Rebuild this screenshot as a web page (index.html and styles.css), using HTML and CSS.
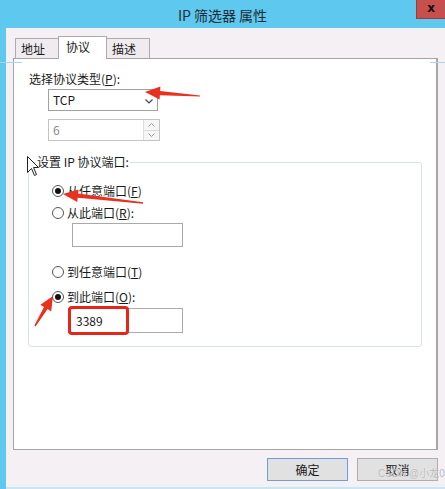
FILE: index.html
```html
<!DOCTYPE html>
<html lang="zh-CN">
<head>
<meta charset="utf-8">
<title>IP 筛选器 属性</title>
<link rel="stylesheet" href="styles.css">
</head>
<body>
<div class="win">
  <div class="titlebar">
    <span></span>
    <span class="title">IP 筛选器 属性</span>
    <span class="close">x</span>
  </div>
  <div class="frame">
    <div class="tabs">
      <div class="tab">地址</div>
      <div class="tab active">协议</div>
      <div class="tab">描述</div>
    </div>
    <div class="panel">
      <div class="label">选择协议类型(<u>P</u>):</div>
      <div class="select">
        <span>TCP</span>
        <svg class="chev" width="8" height="5" viewBox="0 0 8 5"><path d="M0.5 0.5 L4 4 L7.5 0.5" fill="none" stroke="#444" stroke-width="1.2"/></svg>
      </div>
      <div class="spin">
        <span class="spin-val">6</span>
        <div class="spin-btns">
          <div class="sb"><svg width="7" height="4" viewBox="0 0 7 4"><path d="M0.5 3.5 L3.5 0.5 L6.5 3.5" fill="none" stroke="#999" stroke-width="1"/></svg></div>
          <div class="sb"><svg width="7" height="4" viewBox="0 0 7 4"><path d="M0.5 0.5 L3.5 3.5 L6.5 0.5" fill="none" stroke="#999" stroke-width="1"/></svg></div>
        </div>
      </div>
      <fieldset class="group">
        <legend>设置 IP 协议端口:</legend>
        <div class="row r1"><span class="radio checked"></span><span>从任意端口(<u>F</u>)</span></div>
        <div class="row"><span class="radio"></span><span>从此端口(<u>R</u>):</span></div>
        <div class="field f1"></div>
        <div class="row r3"><span class="radio"></span><span>到任意端口(<u>T</u>)</span></div>
        <div class="row r4"><span class="radio checked"></span><span>到此端口(<u>O</u>):</span></div>
        <div class="field f2"><span>3389</span><span class="hl"></span></div>
      </fieldset>
    </div>
    <div class="buttons">
      <div class="btn default">确定</div>
      <div class="btn">取消</div>
    </div>
  </div>
  <div class="watermark">CSDN @小龙0</div>
  <svg class="overlay" width="445" height="489" viewBox="0 0 445 489">
    <line x1="0" y1="62.5" x2="22" y2="62.5" stroke="#a9d3ea" stroke-width="1"/>
    <line x1="430" y1="62.5" x2="445" y2="62.5" stroke="#a9d3ea" stroke-width="1"/>
    <polygon fill="#e8321f" points="145,92 160.4,86.6 160.1,90.9 200,95.4 200,96.6 159.9,95.2 159.6,99.4"/>
    <polygon fill="#e8321f" points="63,194 78.6,189.4 78.1,193.6 143,202.3 143,203.7 77.7,197.8 77.2,202"/>
    <polygon fill="#e8321f" points="53,296 51.2,311.4 47.6,309.1 35.6,326.4 34.4,325.6 44,306.9 40.4,304.8"/>
    <path d="M27.5 156.5 L27.5 172.5 L31.5 168.5 L34.5 175.5 L36.5 174.5 L33.5 167.5 L38.5 167.5 Z" fill="#fff" stroke="#222" stroke-width="1" stroke-linejoin="round"/>
  </svg>
</div>
</body>
</html>
```
FILE: styles.css
```css
* { box-sizing: border-box; }
html, body { margin: 0; padding: 0; }
body {
  width: 445px;
  height: 489px;
  overflow: hidden;
  font-family: "Noto Sans CJK SC", "Noto Sans", sans-serif;
  font-size: 12px;
  color: #1a1a1a;
}
u { text-decoration: underline; text-underline-offset: 1px; }
.win {
  position: relative;
  width: 445px;
  height: 489px;
  background: #5fc8ee;
  display: flex;
  flex-direction: column;
}
.titlebar {
  height: 28px;
  display: grid;
  grid-template-columns: 1fr auto 1fr;
  align-items: center;
}
.title {
  font-size: 14px;
  color: #1c2c35;
  line-height: 28px;
  padding-top: 1px;
}
.close {
  justify-self: end;
  align-self: start;
  width: 29px;
  height: 19px;
  background: #c7504f;
  border: 1px solid #9e3b3a;
  border-top: 0;
  border-right: 0;
  color: #111;
  font-family: "DejaVu Sans", sans-serif;
  font-weight: bold;
  font-size: 12px;
  line-height: 16px;
  text-align: center;
}
.frame {
  flex: 1;
  margin-left: 6px;
  background: #f4f0f4;
  border-bottom: 2px solid #c9e6f3;
  padding-top: 8px;
  display: flex;
  flex-direction: column;
}
.tabs {
  display: flex;
  align-items: flex-end;
  margin-left: 9px;
  height: 22px;
  position: relative;
  z-index: 1;
}
.tab {
  height: 20px;
  width: 44px;
  border: 1px solid #acacac;
  border-bottom: 0;
  background: #efebef;
  font-size: 12px;
  line-height: 19px;
  padding-left: 5px;
  margin-right: -1px;
}
.tab.active {
  height: 23px;
  width: 49px;
  background: #fff;
  margin-bottom: -1px;
  padding-left: 7px;
  line-height: 20px;
}
.panel {
  margin-left: 7px;
  width: 425px;
  height: 392px;
  background: #fff;
  border: 1px solid #a5a5a5;
  border-right: 2px solid #a8a8a8;
  padding: 12px 0 0 14px;
}
.label {
  margin-left: 1px;
  line-height: 16px;
  height: 16px;
}
.select {
  margin: 2px 0 0 20px;
  width: 110px;
  height: 22px;
  border: 1px solid #a0a0a0;
  background: #fff;
  display: flex;
  align-items: center;
  justify-content: space-between;
  padding: 0 4px 0 4px;
  line-height: 16px;
}
.chev { margin-top: 3px; }
.spin {
  margin: 8px 0 0 20px;
  width: 112px;
  height: 22px;
  border: 1px solid #c4c4c4;
  background: #fff;
  display: flex;
  justify-content: space-between;
}
.spin-val {
  color: #8a8a8a;
  padding-left: 4px;
  line-height: 20px;
}
.spin-btns {
  width: 16px;
  display: flex;
  flex-direction: column;
  border-left: 1px solid #dcdcdc;
}
.sb {
  flex: 1;
  display: flex;
  align-items: center;
  justify-content: center;
  background: #f6f6f6;
}
.sb + .sb { border-top: 1px solid #dcdcdc; }
.group {
  margin: 13px 0 0 0;
  width: 394px;
  height: 193px;
  border: 1px solid #d8e1e8;
  border-radius: 3px;
  padding: 0 0 0 23px;
  min-width: 0;
}
.group legend {
  padding: 0 1px;
  margin-left: -16px;
  line-height: 16px;
}
.row {
  display: flex;
  align-items: center;
  gap: 3px;
  height: 22px;
  line-height: 16px;
}
.r1 { margin-top: 10px; }
.r3 { margin-top: 14px; }
.r4 { margin-top: 3px; }
.radio {
  width: 12px;
  height: 12px;
  border: 1px solid #555;
  border-radius: 50%;
  background: #fff;
  display: flex;
  align-items: center;
  justify-content: center;
}
.radio.checked::after {
  content: "";
  width: 6px;
  height: 6px;
  border-radius: 50%;
  background: #111;
}
.field {
  border: 1px solid #a9a9a9;
  background: #fff;
}
.f1 {
  margin: -1px 0 0 20px;
  width: 111px;
  height: 24px;
}
.f2 {
  position: relative;
  margin: 0 0 0 16px;
  width: 115px;
  height: 25px;
  padding-left: 7px;
  line-height: 23px;
}
.hl {
  position: absolute;
  left: -1px;
  top: -3px;
  width: 61px;
  height: 29px;
  border: 3px solid #e5261b;
  border-radius: 4px;
}
.buttons {
  margin-top: 8px;
  display: flex;
  justify-content: flex-end;
  gap: 9px;
  padding-right: 7px;
}
.btn {
  width: 81px;
  height: 23px;
  border: 1px solid #adadad;
  background: #e1e1e1;
  text-align: center;
  line-height: 21px;
}
.btn.default { border-color: #6f9fd0; }
.watermark {
  position: absolute;
  left: 378px;
  top: 467px;
  white-space: nowrap;
  line-height: 13px;
  font-family: "Liberation Sans", "Noto Sans CJK SC", sans-serif;
  font-size: 10px;
  color: rgba(160,160,160,0.75);
  text-shadow: 0 0 1px #fff;
}
.overlay {
  position: absolute;
  left: 0;
  top: 0;
  pointer-events: none;
}
```
